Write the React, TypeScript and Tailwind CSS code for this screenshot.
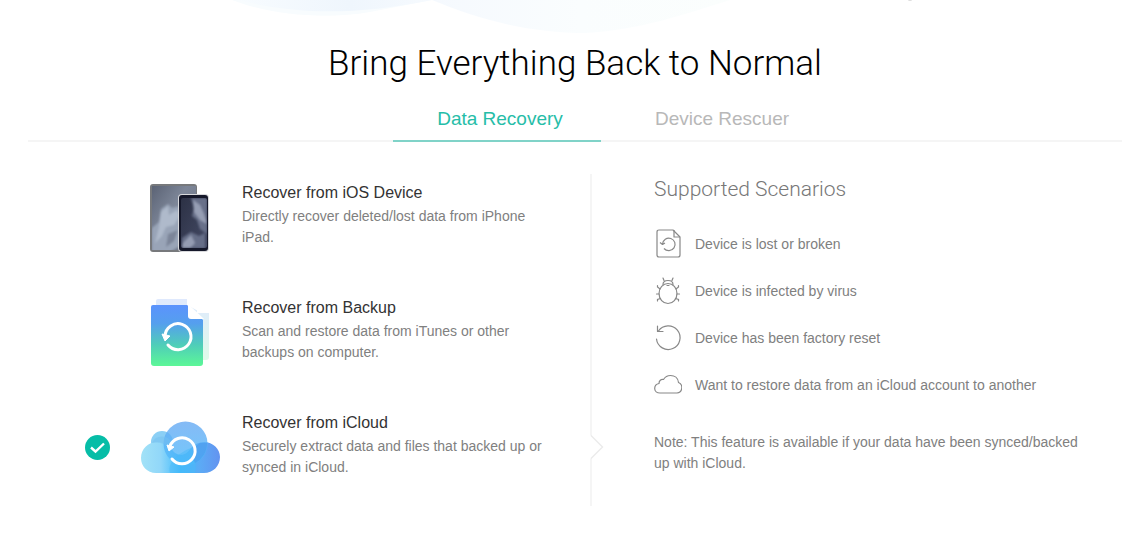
import { useState } from "react";

const tabs = ["Data Recovery", "Device Rescuer"];

function Waves() {
  return (
    <svg className="absolute left-0 top-0 h-10 w-[920px]" viewBox="0 0 920 40" fill="none" aria-hidden="true">
      <defs>
        <linearGradient id="waveA" x1="230" y1="0" x2="430" y2="0" gradientUnits="userSpaceOnUse">
          <stop offset="0" stopColor="#f8fcff" />
          <stop offset="0.6" stopColor="#eff6fd" />
          <stop offset="1" stopColor="#f6fafe" />
        </linearGradient>
        <linearGradient id="waveB" x1="430" y1="0" x2="730" y2="0" gradientUnits="userSpaceOnUse">
          <stop offset="0" stopColor="#f5f9fe" />
          <stop offset="0.5" stopColor="#fafdfe" />
          <stop offset="1" stopColor="#fbfefd" />
        </linearGradient>
      </defs>
      <path d="M232 0C270 15 325 20 370 12L432 0Z" fill="#f8fcfe" />
      <path d="M238 0C290 13 350 17 432 0Z" fill="url(#waveA)" />
      <path d="M432 0C480 20 530 33 586 33C640 30 685 14 730 0Z" fill="url(#waveB)" />
      <ellipse cx="910" cy="0" rx="2" ry="1" fill="#dddddd" />
    </svg>
  );
}

function DevicesIcon() {
  return (
    <svg width="80" height="80" viewBox="0 0 80 80" fill="none">
      <defs>
        <linearGradient id="pad" x1="0" y1="0" x2="1" y2="1">
          <stop offset="0" stopColor="#5b6375" />
          <stop offset="0.4" stopColor="#7d8698" />
          <stop offset="1" stopColor="#6b7384" />
        </linearGradient>
        <linearGradient id="phone" x1="0" y1="0" x2="1" y2="1">
          <stop offset="0" stopColor="#2c3145" />
          <stop offset="1" stopColor="#454b66" />
        </linearGradient>
        <filter id="soft" x="-20%" y="-20%" width="140%" height="140%">
          <feGaussianBlur stdDeviation="1.2" />
        </filter>
        <clipPath id="padClip"><rect x="12" y="8" width="44" height="64" /></clipPath>
        <clipPath id="phoneClip"><rect x="41" y="20" width="26" height="50" rx="2" /></clipPath>
      </defs>
      <rect x="10" y="6" width="47" height="68" rx="3" fill="#77797c" />
      <rect x="12" y="8" width="44" height="64" fill="url(#pad)" />
      <g clipPath="url(#padClip)">
        <g filter="url(#soft)">
          <path d="M12 50L19 44L21 31L28 26L32 30L38 28L44 35L52 40V56L42 67L30 74H12Z" fill="#99a4b7" />
          <path d="M21 34L28 28L29 37L37 32L40 38L34 47L26 49L22 58L15 65L19 49Z" fill="#afbacb" />
          <path d="M28 56L38 52L34 63L26 69Z" fill="#7b8599" />
        </g>
      </g>
      <rect x="38" y="16" width="31" height="58" rx="4" fill="#d8d9dc" />
      <rect x="39" y="17" width="29" height="56" rx="3" fill="#15182a" />
      <rect x="41" y="20" width="26" height="50" rx="2" fill="url(#phone)" />
      <g clipPath="url(#phoneClip)">
        <g filter="url(#soft)">
          <path d="M51 20H67V56L60 51L57 42L52 38L54 30Z" fill="#687089" />
          <path d="M53 22L60 27L64 36L67 46L60 42L54 34Z" fill="#969eb4" />
          <path d="M42 60L51 54L59 58L65 55V70H42Z" fill="#666e88" />
          <path d="M43 65L51 57L55 65L50 70H42Z" fill="#949cb2" />
        </g>
      </g>
      <path d="M48 17H60V18Q60 20 58 20H50Q48 20 48 18Z" fill="#15182a" />
    </svg>
  );
}

function BackupIcon() {
  return (
    <svg width="80" height="80" viewBox="0 0 80 80" fill="none">
      <defs>
        <linearGradient id="file" x1="0" y1="0" x2="0" y2="1">
          <stop offset="0" stopColor="#5b93fd" />
          <stop offset="0.3" stopColor="#559fee" />
          <stop offset="0.65" stopColor="#4fcdb9" />
          <stop offset="1" stopColor="#5cf797" />
        </linearGradient>
        <linearGradient id="fileBack" x1="0" y1="0" x2="0" y2="1">
          <stop offset="0" stopColor="#dfe9fd" />
          <stop offset="1" stopColor="#dffbea" />
        </linearGradient>
      </defs>
      <path d="M18 6H50L69 20V64Q69 67 66 67H18Q16 67 16 64V8Q16 6 18 6Z" fill="url(#fileBack)" />
      <path d="M47 5H54L72 20H62L47 12Z" fill="#fff" />
      <path d="M51 6V10L57 16V20H69" fill="#fff" />
      <path d="M13 12H47L63 27V70Q63 73 60 73H14Q11 73 11 70V14Q11 12 13 12Z" fill="url(#file)" />
      <path d="M48 11L64 26H51Q48 26 48 23Z" fill="#fff" />
      <path d="M25 43A13 13 0 1 1 28 52" stroke="#fff" strokeWidth="3" strokeLinecap="round" />
      <path d="M22 41L30 43L25 48Z" fill="#fff" stroke="#fff" strokeLinejoin="round" />
    </svg>
  );
}

function CloudIcon() {
  return (
    <svg width="80" height="80" viewBox="0 -9 80 80" fill="none">
      <defs>
        <linearGradient id="cloudBase" x1="0" y1="0" x2="1" y2="0">
          <stop offset="0" stopColor="#a2e2f7" />
          <stop offset="0.25" stopColor="#91d7f9" />
          <stop offset="0.5" stopColor="#3fbafb" />
          <stop offset="0.75" stopColor="#5caaf5" />
          <stop offset="1" stopColor="#6393f0" />
        </linearGradient>
        <linearGradient id="cloudTop" x1="0" y1="0" x2="0" y2="1">
          <stop offset="0" stopColor="#67a9f3" />
          <stop offset="1" stopColor="#4dbbfb" />
        </linearGradient>
      </defs>
      <circle cx="22" cy="25" r="11" fill="#8bcff5" />
      <path d="M17 25C27 25 31 32 35 36C42 40 47 37 51 31C55 27 59 25 64 25C73 25 80 32 80 40C80 49 73 56 64 56H16C7 56 1 49 1 41C1 32 8 25 17 25Z" fill="url(#cloudBase)" />
      <circle cx="45.500" cy="26.500" r="22" fill="url(#cloudTop)" opacity="0.8" />
      <path d="M12 26A11 11 0 0 1 32 26L29 31Q22 24 12 26Z" fill="#74bfef" opacity="0.5" />
      <path d="M30 56C26 45 42 34 51 31C55 40 57 49 55 56Z" fill="#49bafa" opacity="0.5" />
      <path d="M67 26A22 22 0 0 1 55 46Q49 32 60 26Z" fill="#4a94e9" opacity="0.5" />
      <path d="M30 29A13 13 0 1 1 32 42" stroke="#fff" strokeWidth="3" strokeLinecap="round" />
      <path d="M27 28L34 30L29 34Z" fill="#fff" stroke="#fff" strokeLinejoin="round" />
    </svg>
  );
}

function FileIcon() {
  return (
    <svg width="28" height="30" viewBox="0 0 28 30" fill="none" stroke="#888" strokeWidth="1.200" strokeLinejoin="round">
      <path d="M5 1H19L26 8V26Q26 28 24 28H5Q3 28 3 26V3Q3 1 5 1Z" />
      <path d="M20 1V8H26" />
      <path d="M8.500 15A6.300 6.300 0 1 1 10 19.500M6 13.500L8.500 15.500L11 14" />
    </svg>
  );
}

function BugIcon() {
  return (
    <svg width="28" height="30" viewBox="0 0 28 30" fill="none" stroke="#888" strokeWidth="1.200" strokeLinecap="round">
      <ellipse cx="14" cy="17.500" rx="9" ry="10" />
      <path d="M9 8.500Q9 4.500 14 4.500T19 8.500M10 4.500L9 2M18 4.500L19 2M13 9.500H15" />
      <path d="M6 13L3.500 11V9.500M5 18H2.500M6.500 22.500L3.500 23.500V25M22 13L24.500 11V9.500M23 18H25.500M21.500 22.500L24.500 23.500V25" />
    </svg>
  );
}

function ResetIcon() {
  return (
    <svg width="28" height="30" viewBox="0 0 28 30" fill="none" stroke="#888" strokeWidth="1.200" strokeLinecap="round" strokeLinejoin="round">
      <path d="M4.500 8A11.800 11.800 0 1 1 2.500 16M3.500 3V8.500H9" />
    </svg>
  );
}

function CloudOutline() {
  return (
    <svg width="28" height="30" viewBox="0 0 28 30" fill="none" stroke="#888" strokeWidth="1.200" strokeLinejoin="round">
      <path d="M6 23H23A5.500 5.500 0 0 0 24.500 12.500C24 8 20.500 5.500 16.500 5.500C13 5.500 11 7 9.500 9.500C7 9 5 10.500 5 13.500C2 14 0.700 16 0.700 18.500C0.700 21 3 23 6 23Z" />
    </svg>
  );
}

const options = [
  {
    title: "Recover from iOS Device",
    text: "Directly recover deleted/lost data from iPhone iPad.",
    icon: <DevicesIcon />,
  },
  {
    title: "Recover from Backup",
    text: "Scan and restore data from iTunes or other backups on computer.",
    icon: <BackupIcon />,
  },
  {
    title: "Recover from iCloud",
    text: "Securely extract data and files that backed up or synced in iCloud.",
    icon: <CloudIcon />,
  },
];

const scenarios = [
  { text: "Device is lost or broken", icon: <FileIcon /> },
  { text: "Device is infected by virus", icon: <BugIcon /> },
  { text: "Device has been factory reset", icon: <ResetIcon /> },
  { text: "Want to restore data from an iCloud account to another", icon: <CloudOutline /> },
];

export default function App() {
  const [tab, setTab] = useState(0);
  const [selected, setSelected] = useState(2);

  return (
    <main className="relative min-h-screen overflow-hidden bg-white pl-7 pr-1.5 pt-10 font-['Liberation_Sans',Arial,sans-serif]">
      <Waves />
      <h1 className="relative text-center font-[Roboto,sans-serif] text-[35px] font-light leading-[48px] text-black">
        Bring Everything Back to Normal
      </h1>

      <div role="tablist" className="mt-2 flex justify-center border-b-2 border-[#f5f5f5] pl-[66px]">
        {tabs.map((name, i) => (
          <button
            key={name}
            role="tab"
            aria-selected={tab === i}
            onClick={() => setTab(i)}
            className={
              "-mb-0.5 h-[46px] w-52 border-b-2 pl-1.5 pt-0.5 text-[19px] " +
              (tab === i ? "border-[#80d3c8] text-[#26bda8]" : "ml-3.5 border-transparent text-[#b8b8b8]")
            }
          >
            {name}
          </button>
        ))}
      </div>

      <div className="mt-8 grid grid-cols-[564fr_530fr]">
        <div className="flex flex-col gap-[38px] border-r-2 border-[#f5f5f5] pb-5 pt-[5px]">
          {options.map((o, i) => (
            <button
              key={o.title}
              onClick={() => setSelected(i)}
              className="relative flex h-[77px] items-center pl-14 pr-8 text-left"
            >
              <span className="w-14 shrink-0">
                {selected === i && (
                  <svg width="27" height="27" viewBox="0 0 27 27" fill="none">
                    <circle cx="13.500" cy="13.500" r="12.500" fill="#06bda7" />
                    <path d="M7 13.500L11.500 17.500L20 9.500" stroke="#fff" strokeWidth="2.400" />
                  </svg>
                )}
              </span>
              <span className="w-[102px] shrink-0">{o.icon}</span>
              <span className="flex-1 pb-2">
                <span className="block text-base leading-[26px] text-[#333]">{o.title}</span>
                <span className="block text-sm leading-[21px] text-[#808080]">{o.text}</span>
              </span>
              {selected === i && (
                <svg className="absolute -right-3.5 top-[26px]" width="14" height="24" viewBox="0 0 14 24" fill="none">
                  <path d="M0 0L12 12L0 24Z" fill="#fff" />
                  <path d="M1 0.500L12.500 12L1 23.500" stroke="#ebebeb" strokeWidth="1.400" />
                </svg>
              )}
            </button>
          ))}
        </div>

        <section className="pl-[62px] pr-7">
          <h2 className="font-[Roboto,sans-serif] text-[21px] font-light leading-[30px] text-[#777]">Supported Scenarios</h2>
          <ul className="mt-4">
            {scenarios.map((s) => (
              <li key={s.text} className="flex h-[47px] items-center gap-[13px] text-sm text-[#808080]">
                {s.icon}
                {s.text}
              </li>
            ))}
          </ul>
          <p className="mt-6 text-sm leading-[21px] text-[#808080]">
            Note: This feature is available if your data have been synced/backed up with iCloud.
          </p>
        </section>
      </div>
    </main>
  );
}
